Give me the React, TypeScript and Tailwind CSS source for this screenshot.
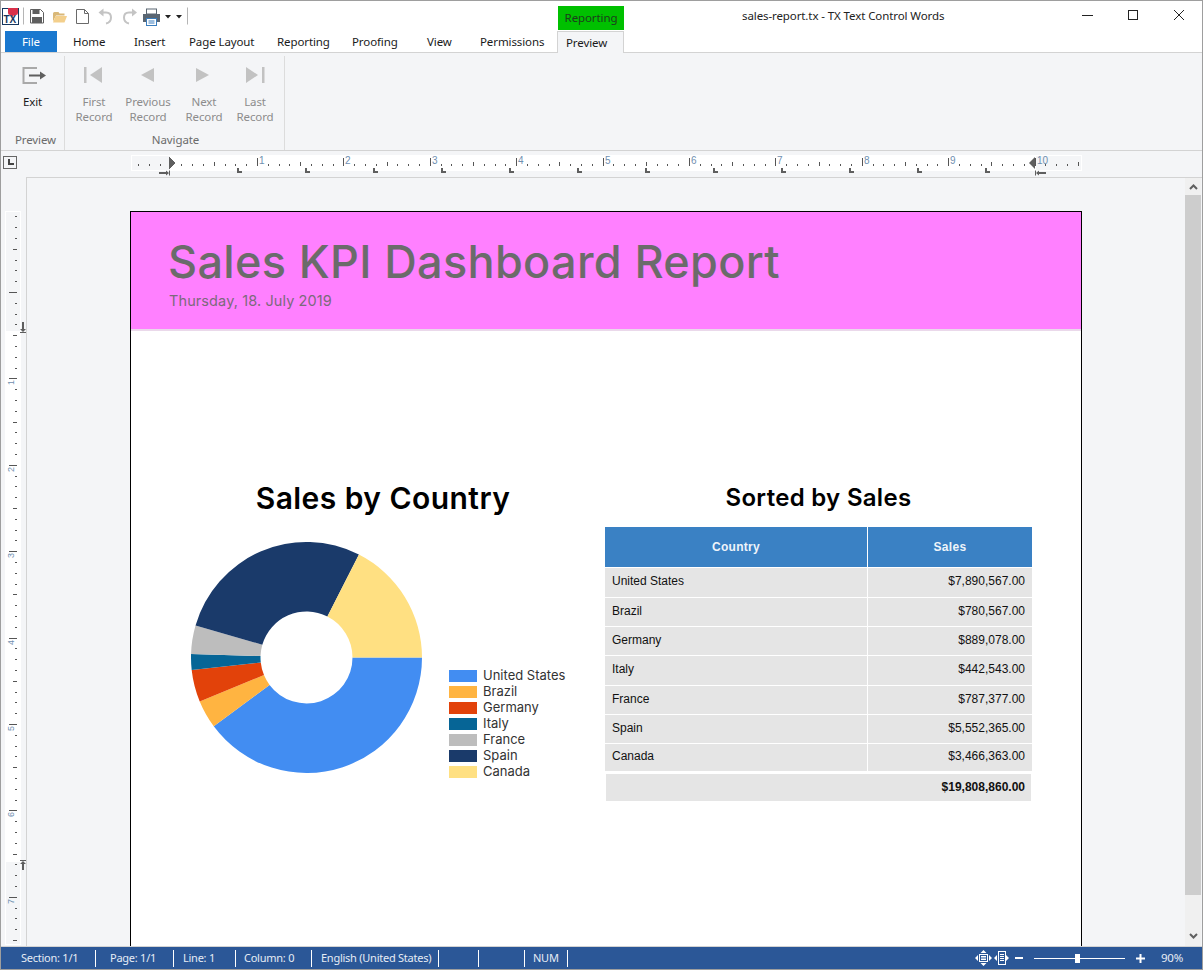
import React from "react";

const uiFont = "font-['Noto_Sans','Open_Sans',sans-serif]";
const uiText = "text-[11.5px] tracking-[-0.1px]";
const headFont = "font-['Inter','Open_Sans',sans-serif]";

const slices = [
  { name: "United States", value: 7890567, color: "#428df2", amount: "$7,890,567.00", h: "h-[30px]" },
  { name: "Brazil", value: 780567, color: "#ffb441", amount: "$780,567.00", h: "h-[29px]" },
  { name: "Germany", value: 889078, color: "#e2420a", amount: "$889,078.00", h: "h-[29px]" },
  { name: "Italy", value: 442543, color: "#066596", amount: "$442,543.00", h: "h-[30px]" },
  { name: "France", value: 787377, color: "#bdbdbd", amount: "$787,377.00", h: "h-[29px]" },
  { name: "Spain", value: 5552365, color: "#1a3a6a", amount: "$5,552,365.00", h: "h-[29px]" },
  { name: "Canada", value: 3466363, color: "#ffe082", amount: "$3,466,363.00", h: "h-[28px]" },
];

function Donut() {
  const total = slices.reduce((s, d) => s + d.value, 0);
  const cx = 115.5;
  const cy = 115.5;
  const R = 115.5;
  const r = 46;
  let a = 0;
  return (
    <svg width="231" height="231" viewBox="0 0 231 231" className="shrink-0">
      {slices.map((d) => {
        const start = a;
        a += (d.value / total) * Math.PI * 2;
        const end = a;
        const large = end - start > Math.PI ? 1 : 0;
        const p = (rad: number, t: number) => `${cx + rad * Math.cos(t)} ${cy + rad * Math.sin(t)}`;
        return (
          <path
            key={d.name}
            fill={d.color}
            d={`M${p(R, start)} A${R} ${R} 0 ${large} 1 ${p(R, end)} L${p(r, end)} A${r} ${r} 0 ${large} 0 ${p(r, start)} Z`}
          />
        );
      })}
    </svg>
  );
}

function Logo() {
  return (
    <svg width="17" height="17" viewBox="0 0 17 17" className="shrink-0">
      <rect x="0.5" y="0.5" width="16" height="16" fill="#fff" stroke="#17365d" />
      <path d="M6 0h10v5q0 2-2 2h-2l-1.5 2L9 7H8Q6 7 6 5z" fill="#d9304a" />
      <text x="1.5" y="15" fontSize="10" fontWeight="700" fill="#17365d" fontFamily="Liberation Sans">TX</text>
    </svg>
  );
}

function QuickIcons() {
  return (
    <svg width="165" height="20" viewBox="0 0 165 20" className="shrink-0">
      <path d="M0.5 1.5v17" stroke="#b5b5b5" />
      <g transform="translate(7 3)">
        <path d="M0.5 .5h10l3 3v10.500h-13z" fill="#fff" stroke="#5f5f5f" />
        <rect x="2.5" y="0" width="7" height="5" fill="#5f5f5f" />
        <rect x="2" y="8" width="10" height="6" fill="#5f5f5f" />
      </g>
      <g transform="translate(30 4)">
        <path d="M0 3.500q0-1.500 1.500-1.500h4l1 1.500h5v2H3l-3 6z" fill="#d9b878" />
        <path d="M2.500 6h11.500l-2.500 6.500H0z" fill="#f3cf8c" />
      </g>
      <path d="M53.500 3.500h8l4 4v10h-12zM61.500 3.500v4h4" fill="#fff" stroke="#6a6a6a" />
      <g fill="none" stroke="#c4c4c4" strokeWidth="2">
        <path d="M78 6.500h5q5 0 5 5t-5 6" />
        <path d="M111 6.500h-5q-5 0-5 5t5 6" />
      </g>
      <path d="M75.500 6.500l5-4v8zM114 6.500l-5-4v8z" fill="#c4c4c4" />
      <g transform="translate(120 3)">
        <rect x="3.5" y="0" width="10" height="5" fill="#fff" stroke="#5a6672" />
        <rect x="0" y="5" width="17" height="8" fill="#5a6672" />
        <rect x="3.5" y="9.5" width="10" height="7" fill="#fff" stroke="#3a7dbd" />
        <path d="M5.500 12h6M5.500 14h6" stroke="#3a7dbd" />
      </g>
      <path d="M142 9h6l-3 3.500zM153 9h6l-3 3.500z" fill="#222" />
      <path d="M164.500 1.500v17" stroke="#b5b5b5" />
    </svg>
  );
}

function WindowControls() {
  return (
    <svg width="104" height="12" viewBox="0 0 104 12" className="shrink-0">
      <path d="M0 6.500h11" stroke="#222" />
      <rect x="46.5" y="1.5" width="9" height="9" fill="none" stroke="#222" />
      <path d="M92 1l10 10M102 1L92 11" stroke="#222" />
    </svg>
  );
}

function Tab({ label, className }: { label: string; className: string }) {
  return <span className={`mt-[2px] whitespace-nowrap leading-none text-[#1a1a1a] ${uiText} ${className}`}>{label}</span>;
}

function NavIcon({ kind }: { kind: "first" | "prev" | "next" | "last" }) {
  return (
    <svg width="20" height="16" viewBox="0 0 20 16" className="mx-auto">
      {kind === "first" && <path d="M0 0h2.500v16H0zM18 0v16L6 8z" fill="#c2c2c2" />}
      {kind === "prev" && <path d="M16 1v14L3 8z" fill="#c2c2c2" />}
      {kind === "next" && <path d="M2 1v14l13-7z" fill="#c2c2c2" />}
      {kind === "last" && <path d="M17 0h2.500v16H17zM1 0v16l12-8z" fill="#c2c2c2" />}
    </svg>
  );
}

function NavButton({ kind, a, b, className }: { kind: "first" | "prev" | "next" | "last"; a: string; b: string; className: string }) {
  return (
    <div className={`text-center leading-[15px] text-[#8c8c8c] ${uiText} ${className}`}>
      <div className="h-[27px]">
        <NavIcon kind={kind} />
      </div>
      <div>{a}</div>
      <div>{b}</div>
    </div>
  );
}

function HRuler() {
  const ticks: React.ReactNode[] = [];
  for (let i = -3; i <= 84; i++) {
    const x = 39.5 + i * 10.8;
    const major = i % 8 === 0;
    const half = i % 4 === 0;
    const h = major ? 8 : half ? 4 : 2;
    if (i === 0) continue;
    ticks.push(<rect key={i} x={Math.round(x)} y={11 - h} width="1" height={h} fill="#555" />);
    if (major && i > 0) {
      ticks.push(
        <text key={`n${i}`} x={Math.round(x) + 2} y="9" fontSize="10" fill="#6f8fb0" fontFamily="Liberation Sans">
          {i / 8}
        </text>
      );
    }
  }
  const stops = [106, 174, 242, 310, 378, 446, 514, 582, 650, 718, 786, 854];
  return (
    <svg width="952" height="21" viewBox="0 0 952 21" className="shrink-0">
      <rect x="0.5" y="0.5" width="950" height="15" fill="#f4f5f7" stroke="#fff" />
      <rect x="39" y="0" width="866" height="16" fill="#fff" />
      {ticks}
      <path d="M38 2h1v1h1v1h1v1h1v1h1v1h1v2h-1v1h-1v1h-1v1h-1v1h-1v1h-1z" fill="#5f5f5f" />
      <path d="M904 2v12l-6-6z" fill="#5f5f5f" />
      <path d="M28 17h7v-1.500l3 2.500-3 2.500V19h-7zM38 15.500h1v5h-1z" fill="#5f5f5f" />
      <path d="M904 15.500h1v5h-1zM915 17h-7v-1.500l-3 2.500 3 2.500V19h7z" fill="#5f5f5f" />
      {stops.map((x) => (
        <path key={x} d={`M${x} 13h2v3h3v2h-5z`} fill="#5f5f5f" />
      ))}
    </svg>
  );
}

function VRuler() {
  const ticks: React.ReactNode[] = [];
  for (let i = -7; i <= 60; i++) {
    const y = 81 + i * 10.8;
    const major = i % 8 === 0;
    const half = i % 4 === 0;
    const w = major ? 8 : half ? 4 : 2;
    ticks.push(<rect key={i} x={12 - w} y={Math.round(y)} width={w} height="1" fill="#555" />);
    if (major && i > 0) {
      ticks.push(
        <text key={`n${i}`} x="0" y="0" fontSize="9" fill="#6f8fb0" fontFamily="Liberation Sans" transform={`translate(9 ${Math.round(y) + 2}) rotate(-90)`} textAnchor="end">
          {i / 8}
        </text>
      );
    }
  }
  return (
    <svg width="22" height="735" viewBox="0 0 22 735" className="shrink-0">
      <rect x="0.5" y="0.5" width="15" height="733" fill="#f4f5f7" stroke="#fff" />
      <rect x="0" y="120" width="16" height="531" fill="#fff" />
      {ticks}
      <path d="M17 111h2v7h2l-3 3-3-3h2zM15 121h6v1h-6z" fill="#5f5f5f" />
      <path d="M15 649h6v1h-6zM17 659h2v-6h2l-3-3-3 3h2z" fill="#5f5f5f" />
    </svg>
  );
}

function StatusCell({ label, className }: { label: string; className: string }) {
  return (
    <div className={`flex h-[17px] shrink-0 items-center whitespace-nowrap border-r border-white ${className}`}>{label}</div>
  );
}

function ZoomIcons() {
  return (
    <svg width="34" height="16" viewBox="0 0 34 16" className="shrink-0" fill="#fff">
      <path d="M8.500 0l3 3h-6zM8.500 16l3-3h-6zM0 8l3-3v6zM17 8l-3-3v6z" />
      <rect x="4.5" y="4.5" width="8" height="7" fill="none" stroke="#fff" />
      <path d="M6 6.500h5M6 8h5M6 9.500h5" stroke="#fff" />
      <path d="M19 8l3-3v6zM34 8l-3-3v6z" />
      <rect x="23.5" y="1.5" width="7" height="13" fill="none" stroke="#fff" />
      <path d="M25 4.500h4M25 6.500h4M25 8.500h4M25 10.500h4" stroke="#fff" />
    </svg>
  );
}

export default function App() {
  return (
    <div className={`flex h-[970px] w-[1203px] flex-col overflow-hidden border border-[#9e9e9e] bg-white ${uiFont}`}>
      {/* title bar */}
      <div className="relative flex h-[29px] shrink-0 items-center">
        <div className="ml-[1px] mt-[1px]">
          <Logo />
        </div>
        <div className="ml-[4px]">
          <QuickIcons />
        </div>
        <div className={`absolute left-[557px] top-[5px] flex h-[24px] w-[66px] items-center justify-center bg-[#00c000] text-[#1d3d1d] ${uiText}`}>
          Reporting
        </div>
        <div className={`absolute left-[741px] top-[6px] whitespace-nowrap leading-[17px] text-[#222] ${uiText}`}>sales-report.tx - TX Text Control Words</div>
        <div className="ml-auto mr-[16px] -mt-[1px]">
          <WindowControls />
        </div>
      </div>

      {/* tabs */}
      <div className="flex h-[23px] shrink-0 items-center border-b border-[#d3d3d3] bg-white">
        <div className={`ml-[4px] flex h-[21px] w-[52px] items-center justify-center self-end bg-[#1a78cf] text-white ${uiText}`}>File</div>
        <Tab label="Home" className="ml-[16px] w-[33px]" />
        <Tab label="Insert" className="ml-[28px] w-[29px]" />
        <Tab label="Page Layout" className="ml-[26px] w-[65px]" />
        <Tab label="Reporting" className="ml-[23px] w-[52px]" />
        <Tab label="Proofing" className="ml-[23px] w-[46px]" />
        <Tab label="View" className="ml-[29px] w-[25px]" />
        <Tab label="Permissions" className="ml-[28px] w-[63px]" />
        <div className={`-mb-px ml-[14px] flex h-[22px] w-[67px] items-center self-end border-x border-t border-[#d3d3d3] bg-[#f4f5f7] pl-[8px] text-[#1a1a1a] ${uiText}`}>Preview</div>
      </div>

      {/* ribbon */}
      <div className="flex h-[98px] shrink-0 border-b border-[#d3d3d3] bg-[#f4f5f7] pt-[3px]">
        <div className="flex w-[64px] shrink-0 flex-col border-r border-[#dcdcdc] pb-[3px]">
          <div className={`flex-1 pt-[11px] text-center leading-[15px] text-[#1a1a1a] ${uiText}`}>
            <div className="h-[27px] pl-[21px]">
              <svg width="25" height="18" viewBox="0 0 25 18">
                <path d="M15 1H1.500v15H15" fill="none" stroke="#a9a9a9" strokeWidth="2" />
                <path d="M7 7.500h11V4.500l6 4-6 4V9.500H7z" fill="#5f5f5f" />
              </svg>
            </div>
            Exit
          </div>
          <div className={`pl-[6px] text-center leading-[15px] text-[#6b6b6b] ${uiText}`}>Preview</div>
        </div>
        <div className="flex w-[220px] shrink-0 flex-col border-r border-[#dcdcdc] pb-[3px]">
          <div className="flex flex-1 pt-[11px]">
            <NavButton kind="first" a="First" b="Record" className="ml-[9px] w-[40px]" />
            <NavButton kind="prev" a="Previous" b="Record" className="ml-[10px] w-[48px]" />
            <NavButton kind="next" a="Next" b="Record" className="ml-[12px] w-[40px]" />
            <NavButton kind="last" a="Last" b="Record" className="ml-[11px] w-[40px]" />
          </div>
          <div className={`pl-[2px] text-center leading-[15px] text-[#6b6b6b] ${uiText}`}>Navigate</div>
        </div>
      </div>

      {/* ruler row */}
      <div className="flex h-[26px] shrink-0 items-start bg-[#f4f5f7] pt-[4px]">
        <div className="ml-[2px] mt-[1px] flex h-[13px] w-[14px] shrink-0 items-center justify-center border border-[#666]">
          <div className="ml-px mt-[-1px] h-[6px] w-[6px] border-b-2 border-l-2 border-[#444]" />
        </div>
        <div className="ml-[114px]">
          <HRuler />
        </div>
      </div>

      {/* workspace */}
      <div className="flex min-h-0 flex-1 bg-[#f4f5f7]">
        <div className="w-[25px] shrink-0 pl-[4px] pt-[34px]">
          <VRuler />
        </div>
        <div className="flex min-w-0 flex-1 border-l border-t border-[#d3d3d3]">
          <div className="min-w-0 flex-1 overflow-hidden pl-[103px] pt-[33px]">
            <div className="h-[760px] w-[952px] border border-black bg-white">
              <div className="h-[119px] border-b-2 border-[#ead9ea] bg-[#ff80ff] pl-[37px] pt-[22px]">
                <h1 className={`text-[45px] font-medium leading-[56px] tracking-[0.35px] text-[#6b6b6b] ${headFont}`}>Sales KPI Dashboard Report</h1>
                <p className={`mt-[1px] pl-px text-[14.5px] leading-[20px] tracking-[0.1px] text-[#7b6a7b] ${headFont}`}>Thursday, 18. July 2019</p>
              </div>
              <div className="grid grid-cols-[428px_427px] gap-x-[8px] pl-[38px] pt-[149px]">
                <div>
                  <h2 className={`text-center text-[30px] font-semibold leading-[36px] tracking-[0.45px] text-black ${headFont}`}>Sales by Country</h2>
                  <div className="ml-[22px] mt-[26px] flex items-start">
                    <Donut />
                    <div className="ml-[27px] mt-[126px] flex flex-col">
                      {slices.map((d) => (
                        <div key={d.name} className={`flex h-[16px] items-center gap-[6px] text-[13px] text-[#333] ${headFont}`}>
                          <span className="h-[12px] w-[28px] shrink-0" style={{ backgroundColor: d.color }} />
                          {d.name}
                        </div>
                      ))}
                    </div>
                  </div>
                </div>
                <div className="pt-[3px]">
                  <h2 className={`text-center text-[24px] font-semibold leading-[30px] tracking-[0.3px] text-black ${headFont}`}>Sorted by Sales</h2>
                  <div className="mt-[14px] font-['Liberation_Sans',Arial,sans-serif] text-[12px] text-[#111]">
                    <div className="flex h-[41px] border-b border-white bg-[#3a81c4] font-bold tracking-[0.3px] text-[#eef4fa]">
                      <div className="flex w-[263px] items-center justify-center border-r border-white">Country</div>
                      <div className="flex flex-1 items-center justify-center">Sales</div>
                    </div>
                    {slices.map((d) => (
                      <div key={d.name} className={`flex border-b border-white bg-[#e5e5e5] ${d.h}`}>
                        <div className="flex w-[263px] items-center border-r border-white pb-[3px] pl-[7px]">{d.name}</div>
                        <div className="flex flex-1 items-center justify-end pb-[3px] pr-[7px]">{d.amount}</div>
                      </div>
                    ))}
                    <div className="mx-px mt-[2px] flex h-[27px] items-center justify-end bg-[#e5e5e5] pb-[2px] pr-[6px] font-bold">$19,808,860.00</div>
                  </div>
                </div>
              </div>
            </div>
          </div>
          {/* scrollbar */}
          <div className="mr-[1px] flex w-[16px] shrink-0 flex-col items-center bg-[#f0f0f0]">
            <div className="flex h-[17px] w-full items-center justify-center">
              <svg width="9" height="6" viewBox="0 0 9 6"><path d="M1 5l3.500-3.500L8 5" fill="none" stroke="#606060" strokeWidth="2" /></svg>
            </div>
            <div className="h-[700px] w-full bg-[#cdcdcd]" />
            <div className="mb-[2px] mt-auto flex h-[17px] w-full items-center justify-center">
              <svg width="9" height="6" viewBox="0 0 9 6"><path d="M1 1l3.500 3.500L8 1" fill="none" stroke="#606060" strokeWidth="2" /></svg>
            </div>
          </div>
        </div>
      </div>

      {/* status bar */}
      <div className="flex h-[23px] shrink-0 items-center border-t border-[#d3d3d3] bg-[#2b5797] text-[11px] tracking-[-0.25px] text-[#e6ecf5]">
        <StatusCell label="Section: 1/1" className="w-[95px] pl-[20px]" />
        <StatusCell label="Page: 1/1" className="w-[78px] pl-[14px]" />
        <StatusCell label="Line: 1" className="w-[62px] pl-[9px]" />
        <StatusCell label="Column: 0" className="w-[76px] pl-[8px]" />
        <StatusCell label="English (United States)" className="w-[127px] pl-[9px]" />
        <StatusCell label="" className="w-[40px]" />
        <StatusCell label="" className="w-[46px]" />
        <StatusCell label="NUM" className="w-[43px] pl-[8px]" />
        <div className="ml-[407px]">
          <ZoomIcons />
        </div>
        <div className="ml-[6px] h-[2px] w-[8px] bg-white" />
        <div className="relative ml-[11px] h-px w-[91px] bg-white">
          <div className="absolute left-[41px] top-[-4px] h-[9px] w-[5px] bg-white" />
        </div>
        <svg width="9" height="9" viewBox="0 0 9 9" className="ml-[11px] shrink-0"><path d="M3.500 0h2v3.500H9v2H5.500V9h-2V5.500H0v-2h3.500z" fill="#fff" /></svg>
        <span className="ml-[16px] text-[11.5px]">90%</span>
      </div>
    </div>
  );
}
